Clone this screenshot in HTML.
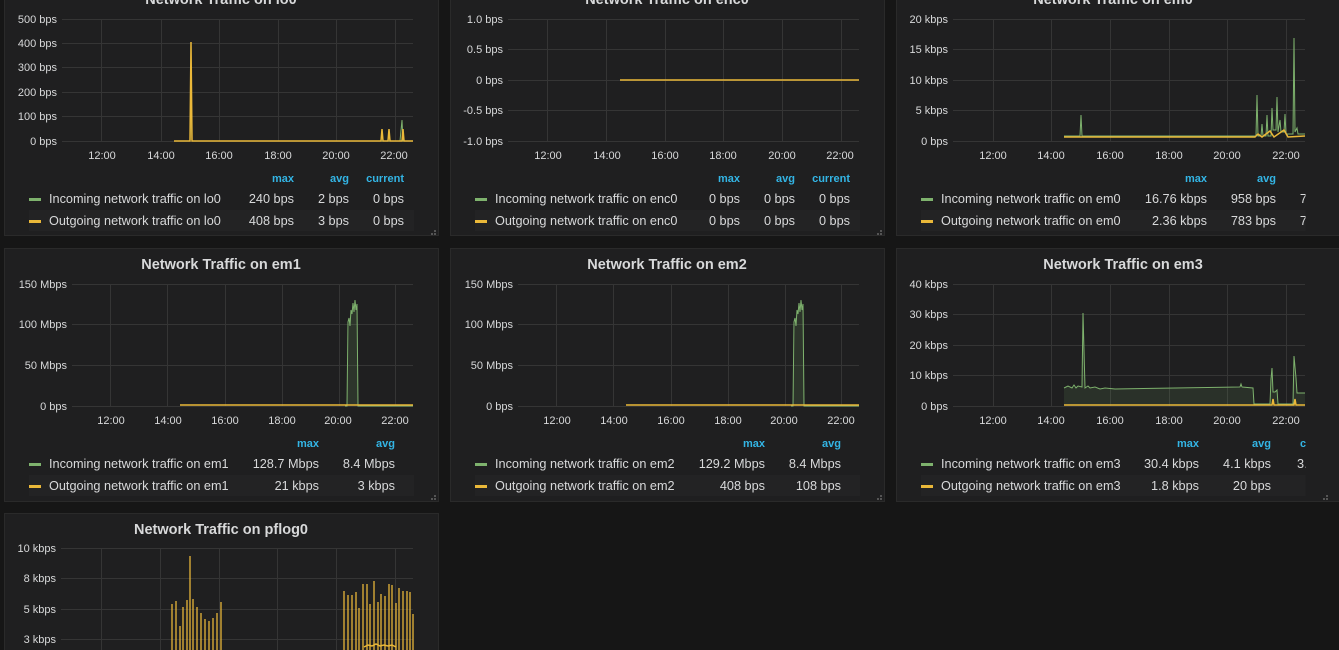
<!DOCTYPE html>
<html><head><meta charset="utf-8"><style>
html,body{margin:0;padding:0;background:#161616;width:1339px;height:650px;overflow:hidden}
svg{display:block}
text{font-family:"Liberation Sans",sans-serif;fill:#d8d9da}
.t{font-size:14.5px;font-weight:600;text-anchor:middle}
.y{font-size:11px;text-anchor:end}
.x{font-size:11px;text-anchor:middle}
.h{font-size:11px;font-weight:bold;fill:#33b5e5;text-anchor:end}
.l{font-size:12.7px}
.v{font-size:12.7px;text-anchor:end}
.g{stroke:#353535;stroke-width:1}
.pn{fill:#1f1f20;stroke:#2a2a2a}
.st{fill:#232324}
.gr{stroke:#7eb26d;fill:none;stroke-width:1}
.ye{stroke:#eab839;fill:none;stroke-width:1.5}
</style></head><body>
<svg width="1339" height="650" viewBox="0 0 1339 650">
<defs>
<clipPath id="c3"><rect x="896" y="-20" width="409.5" height="700"/></clipPath>
</defs>
<rect class="pn" x="4.5" y="-17.5" width="434" height="253"/>
<rect class="pn" x="450.5" y="-17.5" width="434" height="253"/>
<rect class="pn" x="896.5" y="-17.5" width="450" height="253"/>
<rect class="pn" x="4.5" y="248.5" width="434" height="253"/>
<rect class="pn" x="450.5" y="248.5" width="434" height="253"/>
<rect class="pn" x="896.5" y="248.5" width="450" height="253"/>
<rect class="pn" x="4.5" y="513.5" width="434" height="160"/>

<!-- lo0 -->
<text class="t" x="221" y="4">Network Traffic on lo0</text>
<g class="g">
<line x1="62" x2="413" y1="19.5" y2="19.5"/><line x1="62" x2="413" y1="43.5" y2="43.5"/><line x1="62" x2="413" y1="67.5" y2="67.5"/><line x1="62" x2="413" y1="92.5" y2="92.5"/><line x1="62" x2="413" y1="116.5" y2="116.5"/><line x1="62" x2="413" y1="141.5" y2="141.5"/>
<line x1="101.5" x2="101.5" y1="19" y2="141"/><line x1="161.5" x2="161.5" y1="19" y2="141"/><line x1="219.5" x2="219.5" y1="19" y2="141"/><line x1="278.5" x2="278.5" y1="19" y2="141"/><line x1="336.5" x2="336.5" y1="19" y2="141"/><line x1="395.5" x2="395.5" y1="19" y2="141"/>
</g>
<text class="y" x="57" y="23">500 bps</text><text class="y" x="57" y="47">400 bps</text><text class="y" x="57" y="71">300 bps</text><text class="y" x="57" y="96">200 bps</text><text class="y" x="57" y="120">100 bps</text><text class="y" x="57" y="145">0 bps</text>
<text class="x" x="102" y="159">12:00</text><text class="x" x="161" y="159">14:00</text><text class="x" x="219" y="159">16:00</text><text class="x" x="278" y="159">18:00</text><text class="x" x="336" y="159">20:00</text><text class="x" x="394" y="159">22:00</text>
<path class="gr" d="M174,141 L190,141 L191,82 L192,141 L400,141 L402,120 L403,141 L413,141"/>
<path class="ye" d="M174,141 L190,141 L191,42 L192,141 L381,141 L382,129 L383,141 L388,141 L389,129 L390,141 L402,141 L403,129 L404,141 L413,141"/>
<text class="h" x="294" y="182">max</text><text class="h" x="349" y="182">avg</text><text class="h" x="404" y="182">current</text>
<rect class="st" x="29" y="210" width="385" height="21"/>
<rect x="29" y="198" width="12" height="3" fill="#7eb26d"/><rect x="29" y="220" width="12" height="3" fill="#eab839"/>
<text class="l" x="49" y="203">Incoming network traffic on lo0</text><text class="v" x="294" y="203">240 bps</text><text class="v" x="349" y="203">2 bps</text><text class="v" x="404" y="203">0 bps</text>
<text class="l" x="49" y="225">Outgoing network traffic on lo0</text><text class="v" x="294" y="225">408 bps</text><text class="v" x="349" y="225">3 bps</text><text class="v" x="404" y="225">0 bps</text>

<!-- enc0 -->
<text class="t" x="667" y="4">Network Traffic on enc0</text>
<g class="g">
<line x1="508" x2="859" y1="19.5" y2="19.5"/><line x1="508" x2="859" y1="49.5" y2="49.5"/><line x1="508" x2="859" y1="80.5" y2="80.5"/><line x1="508" x2="859" y1="110.5" y2="110.5"/><line x1="508" x2="859" y1="141.5" y2="141.5"/>
<line x1="547.5" x2="547.5" y1="19" y2="141"/><line x1="606.5" x2="606.5" y1="19" y2="141"/><line x1="665.5" x2="665.5" y1="19" y2="141"/><line x1="723.5" x2="723.5" y1="19" y2="141"/><line x1="782.5" x2="782.5" y1="19" y2="141"/><line x1="841.5" x2="841.5" y1="19" y2="141"/>
</g>
<text class="y" x="503" y="23">1.0 bps</text><text class="y" x="503" y="53">0.5 bps</text><text class="y" x="503" y="84">0 bps</text><text class="y" x="503" y="114">-0.5 bps</text><text class="y" x="503" y="145">-1.0 bps</text>
<text class="x" x="548" y="159">12:00</text><text class="x" x="607" y="159">14:00</text><text class="x" x="665" y="159">16:00</text><text class="x" x="723" y="159">18:00</text><text class="x" x="782" y="159">20:00</text><text class="x" x="840" y="159">22:00</text>
<path class="ye" d="M620,80 L859,80"/>
<text class="h" x="740" y="182">max</text><text class="h" x="795" y="182">avg</text><text class="h" x="850" y="182">current</text>
<rect class="st" x="475" y="210" width="385" height="21"/>
<rect x="475" y="198" width="12" height="3" fill="#7eb26d"/><rect x="475" y="220" width="12" height="3" fill="#eab839"/>
<text class="l" x="495" y="203">Incoming network traffic on enc0</text><text class="v" x="740" y="203">0 bps</text><text class="v" x="795" y="203">0 bps</text><text class="v" x="850" y="203">0 bps</text>
<text class="l" x="495" y="225">Outgoing network traffic on enc0</text><text class="v" x="740" y="225">0 bps</text><text class="v" x="795" y="225">0 bps</text><text class="v" x="850" y="225">0 bps</text>

<!-- em0 -->
<text class="t" x="1113" y="4">Network Traffic on em0</text>
<g class="g">
<line x1="953" x2="1305" y1="19.5" y2="19.5"/><line x1="953" x2="1305" y1="49.5" y2="49.5"/><line x1="953" x2="1305" y1="80.5" y2="80.5"/><line x1="953" x2="1305" y1="110.5" y2="110.5"/><line x1="953" x2="1305" y1="141.5" y2="141.5"/>
<line x1="993.5" x2="993.5" y1="19" y2="141"/><line x1="1051.5" x2="1051.5" y1="19" y2="141"/><line x1="1110.5" x2="1110.5" y1="19" y2="141"/><line x1="1169.5" x2="1169.5" y1="19" y2="141"/><line x1="1227.5" x2="1227.5" y1="19" y2="141"/><line x1="1286.5" x2="1286.5" y1="19" y2="141"/>
</g>
<text class="y" x="948" y="23">20 kbps</text><text class="y" x="948" y="53">15 kbps</text><text class="y" x="948" y="84">10 kbps</text><text class="y" x="948" y="114">5 kbps</text><text class="y" x="948" y="145">0 bps</text>
<text class="x" x="993" y="159">12:00</text><text class="x" x="1051" y="159">14:00</text><text class="x" x="1110" y="159">16:00</text><text class="x" x="1169" y="159">18:00</text><text class="x" x="1227" y="159">20:00</text><text class="x" x="1286" y="159">22:00</text>
<path class="gr" d="M1064,136 L1080,136 L1081,115 L1082,136 L1256,136 L1257,95 L1258,136 L1261,136 L1262,124 L1263,136 L1266,136 L1267,115 L1268,136 L1271,136 L1272,108 L1273,130 L1276,130 L1277,97 L1278,132 L1280,120 L1281,132 L1284,132 L1285,114 L1286,134 L1293,134 L1294,38 L1295,132 L1297,128 L1298,134 L1305,134"/>
<path class="ye" d="M1064,137 L1255,137 L1258,134 L1262,137 L1270,131 L1274,137 L1284,130 L1288,137 L1305,136"/>
<g clip-path="url(#c3)">
<text class="h" x="1207" y="182">max</text><text class="h" x="1276" y="182">avg</text><text class="h" x="1345" y="182" style="text-anchor:end">current</text>
<rect class="st" x="921" y="210" width="385" height="21"/>
<text class="l" x="941" y="203">Incoming network traffic on em0</text><text class="v" x="1207" y="203">16.76 kbps</text><text class="v" x="1276" y="203">958 bps</text><text class="v" x="1345" y="203">732 bps</text>
<text class="l" x="941" y="225">Outgoing network traffic on em0</text><text class="v" x="1207" y="225">2.36 kbps</text><text class="v" x="1276" y="225">783 bps</text><text class="v" x="1345" y="225">702 bps</text>
</g>
<rect x="921" y="198" width="12" height="3" fill="#7eb26d"/><rect x="921" y="220" width="12" height="3" fill="#eab839"/>

<!-- em1 -->
<text class="t" x="221" y="269">Network Traffic on em1</text>
<g class="g">
<line x1="72" x2="413" y1="284.5" y2="284.5"/><line x1="72" x2="413" y1="324.5" y2="324.5"/><line x1="72" x2="413" y1="365.5" y2="365.5"/><line x1="72" x2="413" y1="406.5" y2="406.5"/>
<line x1="110.5" x2="110.5" y1="284" y2="406"/><line x1="167.5" x2="167.5" y1="284" y2="406"/><line x1="225.5" x2="225.5" y1="284" y2="406"/><line x1="282.5" x2="282.5" y1="284" y2="406"/><line x1="339.5" x2="339.5" y1="284" y2="406"/><line x1="395.5" x2="395.5" y1="284" y2="406"/>
</g>
<text class="y" x="67" y="288">150 Mbps</text><text class="y" x="67" y="328">100 Mbps</text><text class="y" x="67" y="369">50 Mbps</text><text class="y" x="67" y="410">0 bps</text>
<text class="x" x="111" y="424">12:00</text><text class="x" x="168" y="424">14:00</text><text class="x" x="225" y="424">16:00</text><text class="x" x="282" y="424">18:00</text><text class="x" x="338" y="424">20:00</text><text class="x" x="395" y="424">22:00</text>
<path d="M347,406 L349,320 L350,316 L351,309 L352,311 L353,304 L354,310 L355,302 L356,308 L357,306 L358,406Z" fill="#7eb26d" fill-opacity="0.15"/>
<path class="gr" d="M345,406 L347,406 L348,322 L349,318 L350,326 L351,310 L352,314 L353,303 L354,312 L355,300 L356,310 L357,304 L358,406 L413,406"/>
<path class="ye" d="M180,405 L413,405"/>
<text class="h" x="319" y="447">max</text><text class="h" x="395" y="447">avg</text>
<rect class="st" x="29" y="475" width="385" height="21"/>
<rect x="29" y="463" width="12" height="3" fill="#7eb26d"/><rect x="29" y="485" width="12" height="3" fill="#eab839"/>
<text class="l" x="49" y="468">Incoming network traffic on em1</text><text class="v" x="319" y="468">128.7 Mbps</text><text class="v" x="395" y="468">8.4 Mbps</text>
<text class="l" x="49" y="490">Outgoing network traffic on em1</text><text class="v" x="319" y="490">21 kbps</text><text class="v" x="395" y="490">3 kbps</text>

<!-- em2 -->
<text class="t" x="667" y="269">Network Traffic on em2</text>
<g class="g">
<line x1="518" x2="859" y1="284.5" y2="284.5"/><line x1="518" x2="859" y1="324.5" y2="324.5"/><line x1="518" x2="859" y1="365.5" y2="365.5"/><line x1="518" x2="859" y1="406.5" y2="406.5"/>
<line x1="556.5" x2="556.5" y1="284" y2="406"/><line x1="613.5" x2="613.5" y1="284" y2="406"/><line x1="671.5" x2="671.5" y1="284" y2="406"/><line x1="728.5" x2="728.5" y1="284" y2="406"/><line x1="785.5" x2="785.5" y1="284" y2="406"/><line x1="841.5" x2="841.5" y1="284" y2="406"/>
</g>
<text class="y" x="513" y="288">150 Mbps</text><text class="y" x="513" y="328">100 Mbps</text><text class="y" x="513" y="369">50 Mbps</text><text class="y" x="513" y="410">0 bps</text>
<text class="x" x="557" y="424">12:00</text><text class="x" x="614" y="424">14:00</text><text class="x" x="671" y="424">16:00</text><text class="x" x="728" y="424">18:00</text><text class="x" x="784" y="424">20:00</text><text class="x" x="841" y="424">22:00</text>
<path d="M793,406 L795,320 L796,316 L797,309 L798,311 L799,304 L800,310 L801,302 L802,308 L803,306 L804,406Z" fill="#7eb26d" fill-opacity="0.15"/>
<path class="gr" d="M791,406 L793,406 L794,322 L795,318 L796,326 L797,310 L798,314 L799,303 L800,312 L801,300 L802,310 L803,304 L804,406 L859,406"/>
<path class="ye" d="M626,405 L859,405"/>
<text class="h" x="765" y="447">max</text><text class="h" x="841" y="447">avg</text>
<rect class="st" x="475" y="475" width="385" height="21"/>
<rect x="475" y="463" width="12" height="3" fill="#7eb26d"/><rect x="475" y="485" width="12" height="3" fill="#eab839"/>
<text class="l" x="495" y="468">Incoming network traffic on em2</text><text class="v" x="765" y="468">129.2 Mbps</text><text class="v" x="841" y="468">8.4 Mbps</text>
<text class="l" x="495" y="490">Outgoing network traffic on em2</text><text class="v" x="765" y="490">408 bps</text><text class="v" x="841" y="490">108 bps</text>

<!-- em3 -->
<text class="t" x="1123" y="269">Network Traffic on em3</text>
<g class="g">
<line x1="953" x2="1305" y1="284.5" y2="284.5"/><line x1="953" x2="1305" y1="314.5" y2="314.5"/><line x1="953" x2="1305" y1="345.5" y2="345.5"/><line x1="953" x2="1305" y1="375.5" y2="375.5"/><line x1="953" x2="1305" y1="406.5" y2="406.5"/>
<line x1="993.5" x2="993.5" y1="284" y2="406"/><line x1="1051.5" x2="1051.5" y1="284" y2="406"/><line x1="1110.5" x2="1110.5" y1="284" y2="406"/><line x1="1169.5" x2="1169.5" y1="284" y2="406"/><line x1="1227.5" x2="1227.5" y1="284" y2="406"/><line x1="1286.5" x2="1286.5" y1="284" y2="406"/>
</g>
<text class="y" x="948" y="288">40 kbps</text><text class="y" x="948" y="318">30 kbps</text><text class="y" x="948" y="349">20 kbps</text><text class="y" x="948" y="379">10 kbps</text><text class="y" x="948" y="410">0 bps</text>
<text class="x" x="993" y="424">12:00</text><text class="x" x="1051" y="424">14:00</text><text class="x" x="1110" y="424">16:00</text><text class="x" x="1169" y="424">18:00</text><text class="x" x="1227" y="424">20:00</text><text class="x" x="1286" y="424">22:00</text>
<path d="M1064,388 L1068,386 L1072,388 L1078,386 L1082,387 L1083,313 L1085,388 L1090,387 L1100,389 L1115,389 L1253,388 L1254,404 L1270,404 L1271,379 L1272,368 L1273,392 L1275,392 L1277,390 L1278,404 L1293,404 L1294,356 L1296,378 L1297,393 L1305,393 L1305,406 L1064,406Z" fill="#7eb26d" fill-opacity="0.12"/>
<path class="gr" d="M1064,388 L1068,386 L1072,388 L1074,385 L1076,388 L1078,386 L1082,387 L1083,313 L1085,388 L1088,386 L1090,388 L1095,387 L1100,389 L1105,388 L1115,389 L1240,387 L1241,384 L1242,387 L1253,388 L1254,404 L1270,404 L1271,379 L1272,368 L1273,392 L1275,392 L1277,390 L1278,404 L1293,404 L1294,356 L1296,378 L1297,393 L1305,393"/>
<path class="ye" d="M1064,405 L1272,405 L1273,399 L1274,405 L1294,405 L1295,399 L1296,405 L1305,405"/>
<g clip-path="url(#c3)">
<text class="h" x="1199" y="447">max</text><text class="h" x="1271" y="447">avg</text><text class="h" x="1300" y="447" style="text-anchor:start">current</text>
<rect class="st" x="921" y="475" width="385" height="21"/>
<text class="l" x="941" y="468">Incoming network traffic on em3</text><text class="v" x="1199" y="468">30.4 kbps</text><text class="v" x="1271" y="468">4.1 kbps</text><text class="l" x="1297" y="468">3.8 kbps</text>
<text class="l" x="941" y="490">Outgoing network traffic on em3</text><text class="v" x="1199" y="490">1.8 kbps</text><text class="v" x="1271" y="490">20 bps</text>
</g>
<rect x="921" y="463" width="12" height="3" fill="#7eb26d"/><rect x="921" y="485" width="12" height="3" fill="#eab839"/>

<g fill="#555">
<rect x="434" y="230" width="2" height="2"/><rect x="431" y="233" width="2" height="2"/><rect x="434" y="233" width="2" height="2"/>
<rect x="880" y="230" width="2" height="2"/><rect x="877" y="233" width="2" height="2"/><rect x="880" y="233" width="2" height="2"/>
<rect x="434" y="495" width="2" height="2"/><rect x="431" y="498" width="2" height="2"/><rect x="434" y="498" width="2" height="2"/>
<rect x="880" y="495" width="2" height="2"/><rect x="877" y="498" width="2" height="2"/><rect x="880" y="498" width="2" height="2"/>
<rect x="1326" y="495" width="2" height="2"/><rect x="1323" y="498" width="2" height="2"/><rect x="1326" y="498" width="2" height="2"/>
</g>

<!-- pflog0 -->
<text class="t" x="221" y="534">Network Traffic on pflog0</text>
<g class="g">
<line x1="61" x2="413" y1="548.5" y2="548.5"/><line x1="61" x2="413" y1="578.5" y2="578.5"/><line x1="61" x2="413" y1="609.5" y2="609.5"/><line x1="61" x2="413" y1="639.5" y2="639.5"/>
<line x1="101.5" x2="101.5" y1="548" y2="650"/><line x1="160.5" x2="160.5" y1="548" y2="650"/><line x1="219.5" x2="219.5" y1="548" y2="650"/><line x1="277.5" x2="277.5" y1="548" y2="650"/><line x1="336.5" x2="336.5" y1="548" y2="650"/><line x1="395.5" x2="395.5" y1="548" y2="650"/>
</g>
<text class="y" x="56" y="552">10 kbps</text><text class="y" x="56" y="582">8 kbps</text><text class="y" x="56" y="613">5 kbps</text><text class="y" x="56" y="643">3 kbps</text>
<g stroke="#eab839" stroke-width="1.5" opacity="0.85">
<line x1="172" x2="172" y1="604" y2="650"/><line x1="176" x2="176" y1="601" y2="650"/><line x1="180" x2="180" y1="626" y2="650"/><line x1="183" x2="183" y1="607" y2="650"/><line x1="187" x2="187" y1="600" y2="650"/><line x1="190" x2="190" y1="556" y2="650"/><line x1="193" x2="193" y1="599" y2="650"/><line x1="197" x2="197" y1="607" y2="650"/><line x1="201" x2="201" y1="613" y2="650"/><line x1="205" x2="205" y1="619" y2="650"/><line x1="209" x2="209" y1="621" y2="650"/><line x1="213" x2="213" y1="618" y2="650"/><line x1="217" x2="217" y1="613" y2="650"/><line x1="221" x2="221" y1="602" y2="650"/>
<line x1="344" x2="344" y1="591" y2="650"/><line x1="348" x2="348" y1="595" y2="650"/><line x1="352" x2="352" y1="595" y2="650"/><line x1="356" x2="356" y1="592" y2="650"/><line x1="359" x2="359" y1="608" y2="650"/><line x1="363" x2="363" y1="584" y2="650"/><line x1="367" x2="367" y1="584" y2="650"/><line x1="370" x2="370" y1="604" y2="650"/><line x1="374" x2="374" y1="581" y2="650"/><line x1="378" x2="378" y1="602" y2="650"/><line x1="381" x2="381" y1="594" y2="650"/><line x1="385" x2="385" y1="596" y2="650"/><line x1="389" x2="389" y1="584" y2="650"/><line x1="392" x2="392" y1="585" y2="650"/><line x1="396" x2="396" y1="603" y2="650"/><line x1="399" x2="399" y1="588" y2="650"/><line x1="403" x2="403" y1="591" y2="650"/><line x1="407" x2="407" y1="591" y2="650"/><line x1="410" x2="410" y1="592" y2="650"/><line x1="413" x2="413" y1="614" y2="650"/>
</g>
<path class="ye" d="M364,647 L368,645 L372,646 L376,644 L380,646 L384,645 L388,646 L392,645 L396,647" stroke-width="1"/>
</svg>
</body></html>
